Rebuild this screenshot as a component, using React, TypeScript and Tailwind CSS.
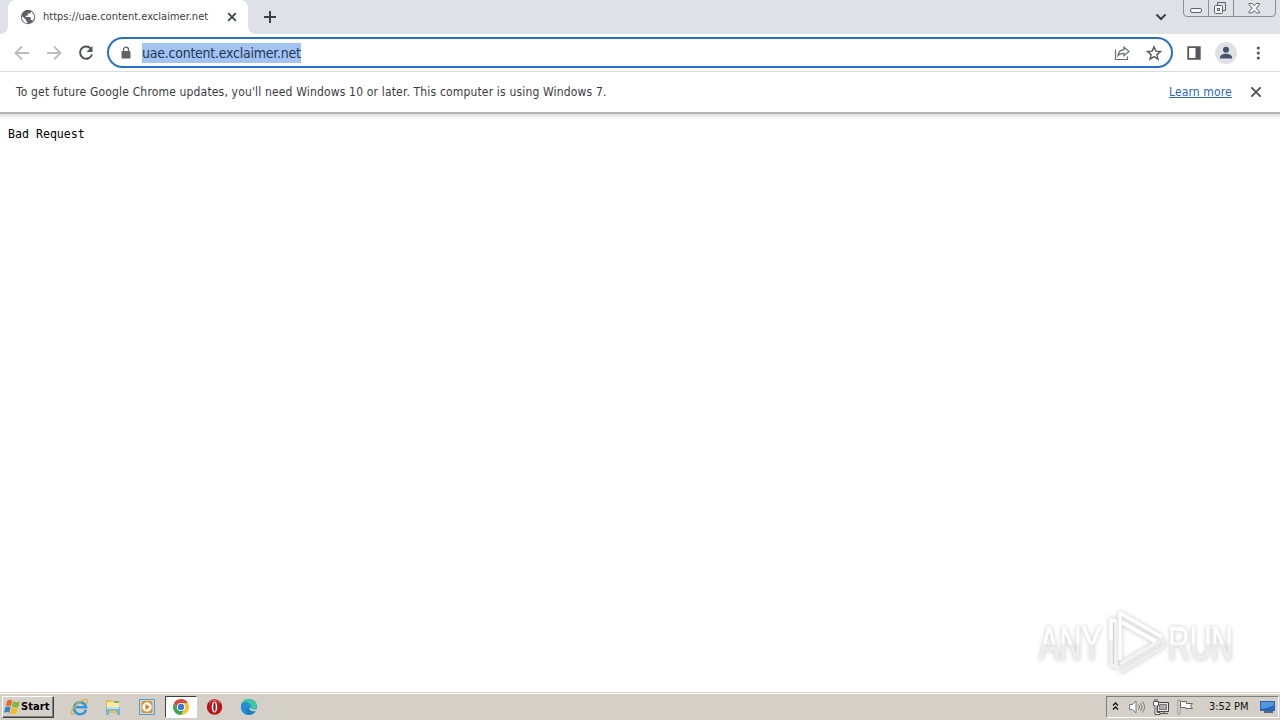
import type { ReactNode } from "react";

const toolIcon = "h-4 w-4 shrink-0";

export default function App() {
  return (
    <div className="relative flex h-[720px] w-[1280px] flex-col overflow-hidden bg-white font-['DejaVu_Sans_Condensed','DejaVu_Sans',sans-serif] text-[#3a3b3e]">
      <TabStrip />
      <Toolbar />
      <InfoBar />
      <main className="flex-1 px-2 pt-2 font-['DejaVu_Sans_Mono',monospace] text-[11.6px] leading-[14px] text-black">
        <pre className="font-['DejaVu_Sans_Mono',monospace]">Bad Request</pre>
      </main>
      <Taskbar />
      <Watermark />
    </div>
  );
}

function TabStrip() {
  return (
    <header className="flex h-[34px] shrink-0 bg-[#dee1e6]">
      <svg className="h-[34px] w-2 shrink-0" viewBox="0 0 8 34">
        <path d="M0 34q8 0 8-8v8z" fill="#fff" />
      </svg>
      <div className="flex w-60 shrink-0 items-center rounded-t-lg bg-white pl-3">
        <svg className="h-4 w-4 shrink-0" viewBox="0 0 16 16">
          <circle cx="8" cy="8" r="7.2" fill="#5f6368" />
          <path
            d="M2.1 7.3 6.2 11v1.1l1.2 1v1.2C4.2 14 1.8 11.3 1.8 8zM12.7 11.9c-.2-.6-.7-1-1.4-1h-.6V8.8c0-.4-.3-.7-.7-.7H5.8V6.7h1.4c.4 0 .7-.3.7-.7V4.600h1.400c.8 0 1.400-.6 1.400-1.400v-.4c2.100.9 3.500 2.900 3.500 5.300 0 1.400-.6 2.800-1.500 3.800z"
            fill="#fff"
          />
        </svg>
        <span className="ml-[7px] w-[182px] whitespace-nowrap text-[11px] tracking-[0.01px]">https://uae.content.exclaimer.net</span>
        <svg className="h-[14px] w-[14px] shrink-0" viewBox="0 0 14 14">
          <path d="m3.200 3.200 7.600 7.600M10.800 3.200l-7.600 7.600" stroke="#3c4043" strokeWidth="1.700" />
        </svg>
      </div>
      <svg className="h-[34px] w-2 shrink-0" viewBox="0 0 8 34">
        <path d="M8 34q-8 0-8-8v8z" fill="#fff" />
      </svg>
      <svg className="mt-[10px] ml-[7px] h-[14px] w-[14px]" viewBox="0 0 14 14">
        <path d="M7 1v12M1 7h12" stroke="#3c4043" strokeWidth="2" />
      </svg>
      <div className="flex-1" />
      <svg className="mt-[11px] mr-4 h-3 w-3" viewBox="0 0 12 12">
        <path d="m1.500 3.500 4.500 4.500 4.500-4.500" fill="none" stroke="#3c4043" strokeWidth="2" />
      </svg>
      <WindowControls />
    </header>
  );
}

function WindowControls() {
  return (
    <svg className="mr-[3px] h-[18px] w-[94px] shrink-0" viewBox="0 0 94 18" fill="none" stroke="#8b8e94">
      <path d="M.5-1v14q0 3.500 3.500 3.500h85q3.500 0 3.500-3.500V-1" />
      <path d="M25.500 0v16M50.500 0v16" />
      <g stroke="#5e636c">
        <rect x="7.500" y="8.500" width="11" height="4" rx="1.500" fill="#f4f5f6" />
        <path d="M34.500 5.500v-3h8v8h-3" />
        <rect x="31.500" y="5.500" width="8" height="8" rx="1" fill="#f4f5f6" />
        <rect x="34.500" y="8.500" width="2" height="2" />
        <path d="M66 3.500h3.200l2 2.300 2-2.300h3.200v1.200l-3.200 3.500 3.200 3.500v1.200h-3.200l-2-2.300-2 2.300H66v-1.200l3.200-3.500L66 4.700z" fill="#f4f5f6" />
      </g>
    </svg>
  );
}

function Toolbar() {
  return (
    <nav className="flex h-[38px] shrink-0 items-center border-b border-[#d9dbde] pl-[14px] pr-[14px]">
      <svg className={toolIcon} viewBox="0 0 16 16" fill="none" stroke="#babcbe" strokeWidth="1.800">
        <path d="M15 8H2M8 1.500 1.500 8 8 14.500" />
      </svg>
      <svg className="ml-4 h-4 w-4 shrink-0" viewBox="0 0 16 16" fill="none" stroke="#babcbe" strokeWidth="1.800">
        <path d="M1 8h13M8 1.500 14.500 8 8 14.500" />
      </svg>
      <svg className="ml-4 h-4 w-4 shrink-0" viewBox="0 0 16 16">
        <path d="M12.600 3.400A6.100 6.100 0 1 0 14 9.500" fill="none" stroke="#505357" strokeWidth="2" />
        <path d="M14.500 1v6h-6z" fill="#505357" />
      </svg>
      <div className="ml-[13px] flex h-[31px] w-[1066px] shrink-0 items-center rounded-full border-2 border-[#2870c8] pl-3 pr-[9px]">
        <svg className="h-[14px] w-[10px] shrink-0" viewBox="0 0 10 14">
          <path d="M2.500 6V3.700a2.500 2.500 0 0 1 5 0V6" fill="none" stroke="#5f6368" strokeWidth="1.300" />
          <rect x=".5" y="5" width="9" height="7.500" rx="1" fill="#5f6368" />
        </svg>
        <span className="ml-[11px] h-5 bg-[#a3c4f3] whitespace-nowrap text-[14px] leading-5 tracking-[-0.24px] text-[#223654]">uae.content.exclaimer.net</span>
        <div className="flex-1" />
        <svg className={toolIcon} viewBox="0 0 16 16" fill="none" stroke="#6a6d71" strokeWidth="1.200">
          <path d="M1.500 4.500v10h12v-3M4 10.500c.4-3.800 2.600-5.700 6-5.900V2l5 4.500-5 4.300V8.300c-2.700-.1-4.600.5-6 2.200z" />
        </svg>
        <svg className="ml-4 h-4 w-4 shrink-0" viewBox="0 0 16 16">
          <path d="m8 1.700 1.800 4.400 4.700.4-3.600 3.100 1.100 4.600-4-2.500-4 2.500 1.100-4.600-3.600-3.100 4.700-.4z" fill="none" stroke="#55585c" strokeWidth="1.400" />
        </svg>
      </div>
      <svg className="ml-[13px] h-4 w-4 shrink-0" viewBox="0 0 16 16">
        <path d="M2.200 2.200h11.600v11.600H2.200z" fill="none" stroke="#55585c" strokeWidth="1.800" />
        <path d="M9.500 2h4.500v12H9.500z" fill="#55585c" />
      </svg>
      <svg className="ml-[13px] h-[22px] w-[22px] shrink-0" viewBox="0 0 22 22">
        <circle cx="11" cy="11" r="11" fill="#dee1e6" />
        <circle cx="11" cy="7.800" r="3" fill="#46546c" />
        <path d="M5 16.500v-1c0-5 12-5 12 0v1z" fill="#46546c" />
      </svg>
      <svg className="ml-[13px] h-4 w-4 shrink-0" viewBox="0 0 16 16" fill="#55585c">
        <circle cx="8.300" cy="3" r="1.600" />
        <circle cx="8.300" cy="8" r="1.600" />
        <circle cx="8.300" cy="13" r="1.600" />
      </svg>
    </nav>
  );
}

function InfoBar() {
  return (
    <>
      <section className="flex h-10 shrink-0 items-center bg-white pl-4 pr-[18px] text-[12px]">
        <p className="whitespace-nowrap tracking-[0.165px]">
          To get future Google Chrome updates, you'll need Windows 10 or later. This computer is using Windows 7.
        </p>
        <a className="ml-auto w-[63px] whitespace-nowrap tracking-[0.12px] text-[#2867bd] underline underline-offset-1" href="#">
          Learn more
        </a>
        <svg className="ml-[18px] h-3 w-3 shrink-0" viewBox="0 0 12 12">
          <path d="m1.300 1.300 9.400 9.400M10.700 1.300l-9.400 9.400" stroke="#505357" strokeWidth="1.900" />
        </svg>
      </section>
      <div className="h-px shrink-0 bg-[#b5b5b5]" />
      <div className="h-px shrink-0 bg-[#b3b3b3]" />
      <div className="h-[5px] shrink-0 bg-gradient-to-b from-[#dedede] to-white" />
    </>
  );
}

function TaskIcon({ children }: { children: ReactNode }) {
  return (
    <svg className="h-[18px] w-[18px] shrink-0" viewBox="0 0 18 18">
      {children}
    </svg>
  );
}

function Taskbar() {
  return (
    <footer className="flex h-7 shrink-0 items-center border-t border-[#d4d0c8] bg-[#d4d0c8] shadow-[inset_0_1px_0_#fff]">
      <button
        type="button"
        className="ml-[2px] flex h-[22px] w-[52px] items-center border border-t-white border-r-[#404040] border-b-[#404040] border-l-white pl-px shadow-[inset_-1px_-1px_0_#808080]"
      >
        <svg className="h-4 w-4 shrink-0" viewBox="0 0 16 16">
          <path d="M3.400 1.500Q6.200-.1 8.300 1.800L7 7.200Q4.500 5.800 1.800 7z" fill="#e8672c" />
          <path d="M9.200 2.300q2.800 1.600 6.700.1l-1.700 5.500q-3.300 1.200-6.300-.4z" fill="#7eb83c" />
          <path d="M1.400 8.100q2.700-1.200 5.200.1l-1.300 5.500q-2.700-1.400-5.300 0z" fill="#3782cc" />
          <path d="M7.600 8.600q2.900 1.600 6.200.4l-1.500 5.500q-3.200 1.300-6.100-.5z" fill="#f3b927" />
        </svg>
        <span className="ml-px text-[11px] leading-none font-bold tracking-[0.1px] text-black">Start</span>
      </button>
      <div className="ml-4 flex items-center">
        <TaskIcon>
          <path d="M15.900 11.700A6 6 0 1 1 16 9.300H6" fill="none" stroke="#3199d9" strokeWidth="2.600" />
          <path d="M4.500 15.500C.4 18.200.3 14.200 3.400 9.800 7.400 4.200 15.400-.5 17.100 2q.9 1.400-.8 4" fill="none" stroke="#e1ad35" strokeWidth="1.200" />
        </TaskIcon>
        <div className="ml-4 h-[18px] w-[18px]">
          <TaskIcon>
            <path d="M2 2h5l1 1h7v12H2z" fill="#e5bb55" />
            <path d="M3 4h12v8H3z" fill="#faeaa0" />
            <path d="M10 3h5v2h-5z" fill="#7db467" />
            <path d="M2 9h14v8h-3v-4q-4-2-8 0v4H2z" fill="#70b6df" />
            <path d="M3 9h12v2H3z" fill="#b8e1f0" />
          </TaskIcon>
        </div>
        <div className="ml-4 h-[18px] w-[18px]">
          <TaskIcon>
            <path d="M1.500 1.500h15v15h-15z" fill="#b9dbef" stroke="#589aca" />
            <rect x="3.500" y="3" width="11" height="12" rx="2" fill="#f08a1d" />
            <circle cx="9" cy="9" r="4.700" fill="#fff" />
            <path d="m7.500 6 4.300 3-4.300 3z" fill="#e9761b" />
          </TaskIcon>
        </div>
      </div>
      <div className="ml-[9px] flex h-[22px] w-[32px] items-center justify-center border border-t-[#404040] border-r-white border-b-white border-l-[#404040] bg-white">
        <svg className="h-[18px] w-[18px]" viewBox="0 0 18 18">
          <path d="M2.070 5A8 8 0 0 1 15.930 5H9a4 4 0 0 0-3.460 6z" fill="#dc4638" />
          <path d="M15.930 5A8 8 0 0 1 9 17l3.460-6A4 4 0 0 0 9 5z" fill="#f7c52f" />
          <path d="M9 17A8 8 0 0 1 2.070 5l3.470 6A4 4 0 0 0 12.460 11z" fill="#3da653" />
          <circle cx="9" cy="9" r="4" fill="#fff" />
          <circle cx="9" cy="9" r="3.200" fill="#397de0" />
        </svg>
      </div>
      <div className="ml-[9px] h-[18px] w-[18px]">
        <TaskIcon>
          <circle cx="8.500" cy="9" r="7.700" fill="#b7141d" />
          <path d="M3 5q5.500-5 11 0" fill="none" stroke="#e96f70" />
          <ellipse cx="8.500" cy="9" rx="2.800" ry="5.600" fill="#fff" />
          <ellipse cx="8.500" cy="9" rx="1.200" ry="4.500" fill="#9e151c" />
        </TaskIcon>
      </div>
      <div className="ml-4 h-[18px] w-[18px]">
        <TaskIcon>
          <circle cx="9" cy="9" r="8" fill="#167fcb" />
          <path d="M1.500 6C3-.4 14.300-1 16.900 7c.5 4-3.900 5.800-6.600 4 2.200-3.700-2.400-7.300-8.800-5z" fill="#42c7a0" />
          <path d="M1.500 6c5-4.400 10.500-.5 9 4-2.600-2.500-7.100 1.700-2.600 6.900C2.700 16.500-.4 11 1.500 6z" fill="#208ed7" />
          <path d="M9.700 9.200c-1.700 2.800 3 5.100 6.500 3.600l1.300-1.300V9.500C16.800 12 11 12.400 9.700 9.200z" fill="#d4d0c8" />
        </TaskIcon>
      </div>
      <SystemTray />
    </footer>
  );
}

function SystemTray() {
  return (
    <div className="mr-px ml-auto flex h-[22px] w-[173px] items-center border border-t-[#808080] border-r-white border-b-white border-l-[#808080]">
      <svg className="ml-1 h-3 w-[9px] shrink-0" viewBox="0 0 9 12" fill="none" stroke="#111" strokeWidth="1.300">
        <path d="m2 4.500 2.500-2.500L7 4.500M2 8.500 4.500 6 7 8.500" />
      </svg>
      <svg className="ml-2 h-4 w-[18px] shrink-0" viewBox="0 0 18 16" fill="none" stroke="#7b7b7b">
        <path d="M1.500 5.500h3l3.500-3.500v12l-3.500-3.500h-3z" fill="#fff" />
        <path d="M10.500 5.500q2 2.500 0 5M12.500 4q3 4 0 8M14.500 2.500q4 5.500 0 11" />
      </svg>
      <svg className="ml-[7px] h-4 w-4 shrink-0" viewBox="0 0 16 16">
        <path d="M4.500 3.500h11v9h-11z" fill="#e8e8e8" stroke="#444" />
        <path d="M6.500 5.500h7v5h-7z" fill="#aaa" stroke="#777" />
        <path d="M7 14.500h8M11 12.500v2" stroke="#555" />
        <path d="M.5 2.500h5v4h-1.500v7h3v2h-5v-9H.5zM2 0v2M4 0v2" fill="#fff" stroke="#555" />
      </svg>
      <svg className="ml-2 h-4 w-4 shrink-0" viewBox="0 0 16 16">
        <path d="M1 1h2v14H1z" fill="#fff" stroke="#777" strokeWidth=".8" />
        <path d="M3.500 2.500h6v2h6l-2 2.500 2 2.500h-7v-1h-5z" fill="#fff" stroke="#666" />
      </svg>
      <time className="mt-[2px] ml-4 w-[42px] whitespace-nowrap text-[11px] tracking-[-0.05px] text-[#111]">3:52 PM</time>
      <svg className="ml-2 h-4 w-[18px] shrink-0" viewBox="0 0 18 16">
        <path d="M1 2h15v10H1z" fill="#2866b9" />
        <path d="M2 3h13v3Q8 10 2 10z" fill="#5596dc" />
        <path d="M5 12h9v2H5z" fill="#526b86" />
      </svg>
    </div>
  );
}

function Watermark() {
  return (
    <svg
      className="pointer-events-none absolute top-[600px] left-[1024px] h-20 w-[228px] overflow-visible [filter:drop-shadow(0_0_2px_#c4c4c4)]"
      viewBox="-6 -4 228 80"
    >
      <defs>
        <linearGradient id="mark" x1="0" x2="0" y1="0" y2="1">
          <stop offset=".5" stopColor="#fff" />
          <stop offset=".54" stopColor="#ededed" />
          <stop offset="1" stopColor="#f0f0f0" />
        </linearGradient>
      </defs>
      <g className="font-['Liberation_Sans_Narrow','Liberation_Sans',sans-serif] text-[49px]" fill="url(#mark)" stroke="url(#mark)" strokeWidth=".6">
        <text x="9" y="56" textLength="63" lengthAdjust="spacingAndGlyphs">ANY</text>
        <text x="138" y="56" textLength="65" lengthAdjust="spacingAndGlyphs">RUN</text>
      </g>
      <g fill="none" strokeLinejoin="round" strokeWidth="3.500">
        <path d="M86 62V17l-5-2v46l8 3" stroke="#f3f3f3" />
        <path d="M90 56V9l42 24" stroke="#fff" />
        <path d="m92 19 34 20-36 21" stroke="#f3f3f3" />
        <path d="m92 18 34 19" stroke="#fff" />
        <path d="m91 68 42-25v-8" stroke="#ededed" />
        <path d="M81 36V16l5 1" stroke="#fff" />
      </g>
    </svg>
  );
}
